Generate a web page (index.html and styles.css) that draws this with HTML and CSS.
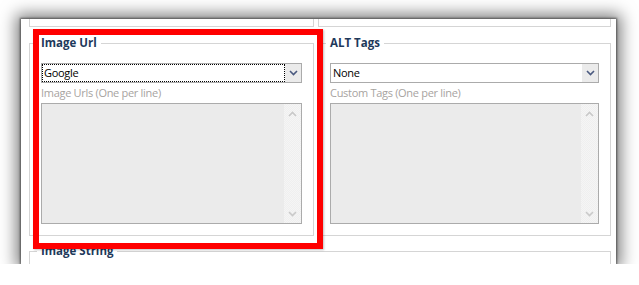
FILE: index.html
```html
<!DOCTYPE html>
<html lang="en">
<head>
    <meta charset="UTF-8">
    <title>Image Options</title>
    <link rel="stylesheet" href="styles.css">
</head>
<body>
    <div class="window">
        <!-- end of the group above -->
        <div class="columns stubs">
            <div class="stub"></div>
            <div class="stub"></div>
        </div>

        <div class="columns">
            <fieldset class="group">
                <legend>Image Url</legend>
                <div class="combo">
                    <span class="combo-text focused">Google</span>
                    <span class="combo-btn">
                        <svg width="9" height="6" viewBox="0 0 9 6"><path d="M1 1l3.5 3.5L8 1" /></svg>
                    </span>
                </div>
                <div class="field-label">Image Urls (One per line)</div>
                <div class="memo">
                    <div class="memo-scroll">
                        <svg width="9" height="6" viewBox="0 0 9 6"><path d="M1 5l3.5-3.5L8 5" /></svg>
                        <svg width="9" height="6" viewBox="0 0 9 6"><path d="M1 1l3.5 3.5L8 1" /></svg>
                    </div>
                </div>
            </fieldset>

            <fieldset class="group">
                <legend>ALT Tags</legend>
                <div class="combo">
                    <span class="combo-text">None</span>
                    <span class="combo-btn">
                        <svg width="9" height="6" viewBox="0 0 9 6"><path d="M1 1l3.5 3.5L8 1" /></svg>
                    </span>
                </div>
                <div class="field-label">Custom Tags (One per line)</div>
                <div class="memo">
                    <div class="memo-scroll">
                        <svg width="9" height="6" viewBox="0 0 9 6"><path d="M1 5l3.5-3.5L8 5" /></svg>
                        <svg width="9" height="6" viewBox="0 0 9 6"><path d="M1 1l3.5 3.5L8 1" /></svg>
                    </div>
                </div>
            </fieldset>
        </div>

        <fieldset class="group wide">
            <legend>Image String</legend>
        </fieldset>

        <!-- red callout drawn over the form -->
        <div class="highlight"></div>
    </div>
</body>
</html>
```

FILE: styles.css
```css
* {
    box-sizing: border-box;
}

body {
    margin: 0;
    background: #fff;
    font-family: "Open Sans", "Noto Sans", sans-serif;
    font-size: 11px;
    letter-spacing: -0.3px;
}

/* window with its drop shadow */
.window {
    position: relative;
    width: 595px;
    height: 245px;
    margin: 19px 0 0 21px;
    padding-left: 8px;
    background: #fff;
    overflow: hidden;
    box-shadow: 0 0 2px 1px rgba(0, 0, 0, 0.5), 0 0 15px 5px rgba(0, 0, 0, 0.5);
}

.columns {
    display: grid;
    grid-template-columns: 285px 293px;
    column-gap: 4px;
    margin-top: 9px;
}

.stubs {
    margin-top: 0;
}

.stub {
    height: 8px;
    border: 1px solid #d5d5d5;
    border-top: none;
}

/* group boxes */
.group {
    min-width: 0;
    margin: 0;
    padding: 13px 11px 11px;
    border: 1px solid #d5d5d5;
}

.group legend {
    margin-left: -4px;
    padding: 0 4px;
    line-height: 14px;
    font-size: 11.5px;
    font-weight: 700;
    letter-spacing: 0;
    color: #1e395b;
}

.group.wide {
    width: 582px;
    height: 40px;
    margin-top: 8px;
}

/* combo box */
.combo {
    display: flex;
    height: 20px;
    border: 1px solid #ababab;
    background: #fff;
}

.combo-text {
    flex: 1;
    padding-left: 1px;
    line-height: 16px;
    color: #000;
    border: 1px solid transparent;
}

.combo-text.focused {
    border: 1px dotted #000;
}

.combo-btn {
    display: flex;
    align-items: center;
    justify-content: center;
    width: 16px;
    background: #ebebeb;
}

.combo-btn path {
    fill: none;
    stroke: #4b5a80;
    stroke-width: 1.6;
}

.field-label {
    height: 20px;
    line-height: 20px;
    color: #a7a39f;
}

/* memo with disabled scrollbar */
.memo {
    display: flex;
    justify-content: flex-end;
    height: 121px;
    border: 1px solid #ababab;
    background: #ebebeb;
}

.memo-scroll {
    display: flex;
    flex-direction: column;
    justify-content: space-between;
    align-items: center;
    width: 17px;
    padding: 7px 0 6px;
    background: repeating-conic-gradient(#efefef 0 25%, #f5f5f5 0 50%) 0 0 / 2px 2px;
}

.memo-scroll path {
    fill: none;
    stroke: #c9c9c9;
    stroke-width: 1.6;
}

.highlight {
    position: absolute;
    left: 12px;
    top: 10px;
    width: 290px;
    height: 220px;
    border: 6px solid #ff0000;
    box-shadow: 1px 1px 2px rgba(0, 0, 0, 0.25);
}
```
